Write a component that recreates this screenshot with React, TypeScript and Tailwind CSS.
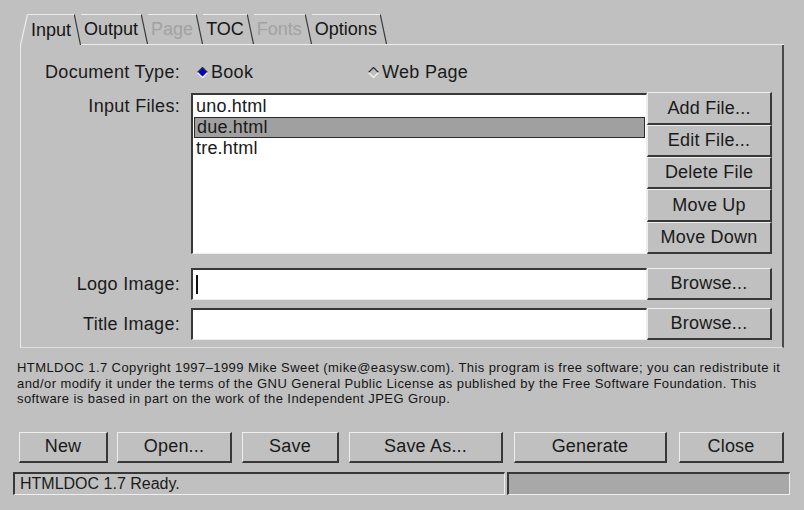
import type { ReactNode } from "react";

const font = { fontFamily: '"Liberation Sans", Arial, Helvetica, sans-serif' };

function Tab({ label, first, active, disabled }: { label: string; first?: boolean; active?: boolean; disabled?: boolean }) {
  return (
    <div className={`flex h-[31px] ${active ? "" : "border-b border-b-[#ececec]"}`}>
      {first && (
        <svg width="8" className="h-full" viewBox="0 0 8 31" preserveAspectRatio="none">
          <line x1="0.5" y1="31" x2="7.5" y2="0.5" stroke="#ececec" strokeWidth="1.2" />
        </svg>
      )}
      <div
        className={`flex items-center border-t border-t-[#ececec] px-[3px] text-[18px] ${
          disabled ? "text-[#a2a2a2]" : "text-[#151515]"
        }`}
      >
        {label}
      </div>
      <svg width="7" className="h-full" viewBox="0 0 7 30" preserveAspectRatio="none">
        <line x1="0.3" y1="0.5" x2="6.5" y2="30" stroke="#3a3a3a" strokeWidth="1.2" />
      </svg>
    </div>
  );
}

function Btn({ children, className = "" }: { children: ReactNode; className?: string }) {
  return (
    <button
      type="button"
      className={`flex items-center justify-center border-t border-l border-t-[#eeeeee] border-l-[#eeeeee] border-r-2 border-b-2 border-r-[#383838] border-b-[#383838] bg-[#c0c0c0] text-[18px] tracking-[0.2px] text-[#1a1a1a] ${className}`}
    >
      {children}
    </button>
  );
}

function Radio({ on }: { on?: boolean }) {
  return (
    <svg width="11" height="11" viewBox="0 0 11 11" className="mr-[3px]">
      <polygon points="5.5,0.5 10.5,5.5 5.5,10.5 0.5,5.5" fill={on ? "#0000c8" : "#c0c0c0"} />
      <polyline points="0.5,5.5 5.5,0.5 10.5,5.5" fill="none" stroke="#303030" strokeWidth="1.3" />
      <polyline points="0.5,5.5 5.5,10.5 10.5,5.5" fill="none" stroke="#f4f4f4" strokeWidth="1.3" />
    </svg>
  );
}

const sunken = "border-t-2 border-l-2 border-t-[#383838] border-l-[#383838] border-b border-r border-b-[#eeeeee] border-r-[#eeeeee]";

export default function App() {
  return (
    <div style={font} className="flex h-[510px] w-[804px] flex-col overflow-hidden bg-[#c0c0c0] pt-[14px] text-[#1a1a1a]">
      <div className="ml-[20px] w-[764px]">
        <div className="flex">
          <Tab label="Input" first active />
          <Tab label="Output" />
          <Tab label="Page" disabled />
          <Tab label="TOC" />
          <Tab label="Fonts" disabled />
          <Tab label="Options" />
          <div className="flex-1 border-b border-b-[#ececec]" />
        </div>

        <div className="flex flex-col border-l border-l-[#ececec] border-r-2 border-r-[#4a4a4a] border-b border-b-[#dedede] pb-[7px] text-[18px] tracking-[0.3px]">
          <div className="mt-[15px] flex h-[24px] items-center">
            <div className="w-[159px] text-right">Document Type:</div>
            <div className="ml-[17px] flex w-[171px] items-center">
              <Radio on />
              <span>Book</span>
            </div>
            <div className="flex items-center">
              <Radio />
              <span>Web Page</span>
            </div>
          </div>

          <div className="mt-[8px] flex h-[162px]">
            <div className="w-[159px] pt-[1px] text-right">Input Files:</div>
            <div className={`ml-[11px] mt-[1px] h-[161px] w-[456px] bg-white pt-[1px] tracking-[0.2px] ${sunken}`}>
              <div className="flex h-[21px] items-center pl-[3px]">uno.html</div>
              <div className="mx-[1px] flex h-[21px] items-center border border-[#2a2a2a] bg-[#a0a0a0] pl-[2px]">
                due.html
              </div>
              <div className="flex h-[21px] items-center pl-[3px]">tre.html</div>
            </div>
            <div className="flex w-[125px] flex-col">
              <Btn className="h-[33px]">Add File...</Btn>
              <Btn className="h-[32px]">Edit File...</Btn>
              <Btn className="h-[32px]">Delete File</Btn>
              <Btn className="h-[33px]">Move Up</Btn>
              <Btn className="h-[32px]">Move Down</Btn>
            </div>
          </div>

          <div className="mt-[14px] flex h-[32px] items-center">
            <div className="w-[159px] text-right">Logo Image:</div>
            <div className={`ml-[11px] flex h-[32px] w-[456px] items-center bg-white ${sunken}`}>
              <span className="ml-[3px] h-[19px] w-[2px] bg-[#111]" />
            </div>
            <Btn className="h-[32px] w-[125px]">Browse...</Btn>
          </div>

          <div className="mt-[8px] flex h-[32px] items-center">
            <div className="w-[159px] text-right">Title Image:</div>
            <div className={`ml-[11px] h-[32px] w-[456px] bg-white ${sunken}`} />
            <Btn className="h-[32px] w-[125px]">Browse...</Btn>
          </div>
        </div>
      </div>

      <p className="ml-[17px] mt-[12px] whitespace-nowrap text-[13px] leading-[15.5px] tracking-[0.42px] text-[#151515]">
        HTMLDOC 1.7 Copyright 1997–1999 Mike Sweet (mike@easysw.com). This program is free software; you can redistribute it
        <br />
        and/or modify it under the terms of the GNU General Public License as published by the Free Software Foundation. This
        <br />
        software is based in part on the work of the Independent JPEG Group.
      </p>

      <div className="ml-[19px] mt-[25px] flex h-[31px]">
        <Btn className="w-[89px]">New</Btn>
        <Btn className="ml-[9px] w-[115px]">Open...</Btn>
        <Btn className="ml-[10px] w-[97px]">Save</Btn>
        <Btn className="ml-[10px] w-[154px]">Save As...</Btn>
        <Btn className="ml-[11px] w-[153px]">Generate</Btn>
        <Btn className="ml-[12px] w-[105px]">Close</Btn>
      </div>

      <div className="ml-[13px] mt-[9px] flex h-[23px]">
        <div className={`flex w-[492px] items-center pl-[5px] text-[16px] ${sunken}`}>HTMLDOC 1.7 Ready.</div>
        <div className={`ml-[2px] w-[283px] bg-[#a8a8a8] ${sunken}`} />
      </div>
    </div>
  );
}
